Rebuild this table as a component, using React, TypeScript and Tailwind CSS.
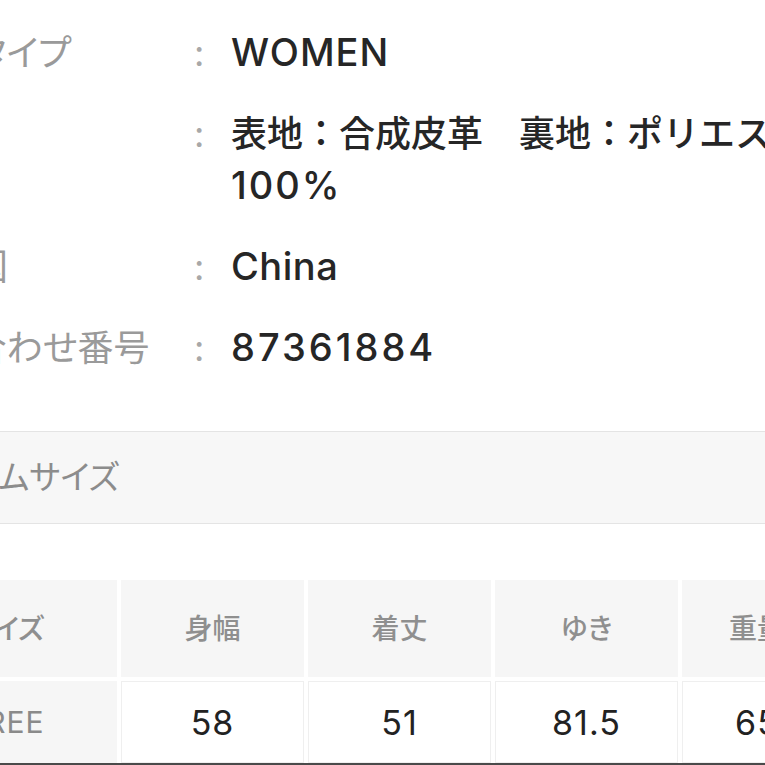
import React from "react";

const rows: { label: string; labelCls?: string; value: React.ReactNode }[] = [
  {
    label: "性別タイプ",
    labelCls: "ml-[3px]",
    value: <span className="text-[38px] leading-[40px] tracking-[1px]">WOMEN</span>,
  },
  {
    label: "素材",
    value: (
      <>
        表地：合成皮革　裏地：ポリエステル
        <br />
        <span className="text-[38px] leading-[40px] tracking-[2px]">100%</span>
      </>
    ),
  },
  { label: "原産国", value: <span className="text-[38px] leading-[40px] tracking-[0.5px]">China</span> },
  {
    label: "お問い合わせ番号",
    labelCls: "ml-[-34px]",
    value: <span className="text-[38px] leading-[40px] tracking-[3px]">87361884</span>,
  },
];

const heads = ["身幅", "着丈", "ゆき", "重量"];
const vals = ["58", "51", "81.5", "65"];

export default function App() {
  return (
    <div
      className="w-[765px] h-[765px] overflow-hidden bg-white"
      style={{ fontFamily: '"Inter", "Noto Sans CJK JP", sans-serif' }}
    >
      <div className="ml-[-100px] pt-[27px] flex flex-col gap-[29px]">
        {rows.map((r) => (
          <div key={r.label} className="flex items-start">
            <div className="w-[294px] shrink-0 text-[36px] leading-[52px] text-[#9a9a9a] [font-feature-settings:'palt'] whitespace-nowrap">
              <span className={r.labelCls ?? ""}>{r.label}</span>
            </div>
            <div className="w-[37px] shrink-0 text-[36px] leading-[52px] text-[#a8a8a8]">:</div>
            <div className="w-[640px] shrink-0 text-[36px] leading-[52px] text-[#262626] font-medium whitespace-nowrap">
              {r.value}
            </div>
          </div>
        ))}
      </div>

      <div className="mt-[57px] h-[93px] border-y border-[#e4e4e4] bg-[#f7f7f7] flex items-center">
        <div className="ml-[-88px] text-[33px] text-[#8c8c8c] [font-feature-settings:'palt'] whitespace-nowrap">
          アイテムサイズ
        </div>
      </div>

      <div className="mt-[56px] ml-[-105px] grid grid-cols-[222px_183px_183px_183px_150px] gap-[4px] bg-white">
        <div className="h-[97px] bg-[#f6f6f6] flex items-center justify-center text-[28px] text-[#8f8f8f] font-medium [font-feature-settings:'palt']">
          サイズ
        </div>
        {heads.map((h) => (
          <div
            key={h}
            className="h-[97px] bg-[#f6f6f6] flex items-center justify-center text-[28px] text-[#8f8f8f] font-medium [font-feature-settings:'palt']"
          >
            {h}
          </div>
        ))}
        <div className="h-[82px] bg-[#f6f6f6] flex items-center justify-center text-[30px] text-[#8a8a8a] tracking-[1px]">
          FREE
        </div>
        {vals.map((v) => (
          <div
            key={v}
            className="h-[82px] bg-white border border-[#efefef] flex items-center justify-center text-[34px] text-[#222222] tracking-[1px]"
          >
            {v}
          </div>
        ))}
      </div>
      <div className="h-[2px] bg-[#4a4a4a]" />
    </div>
  );
}
